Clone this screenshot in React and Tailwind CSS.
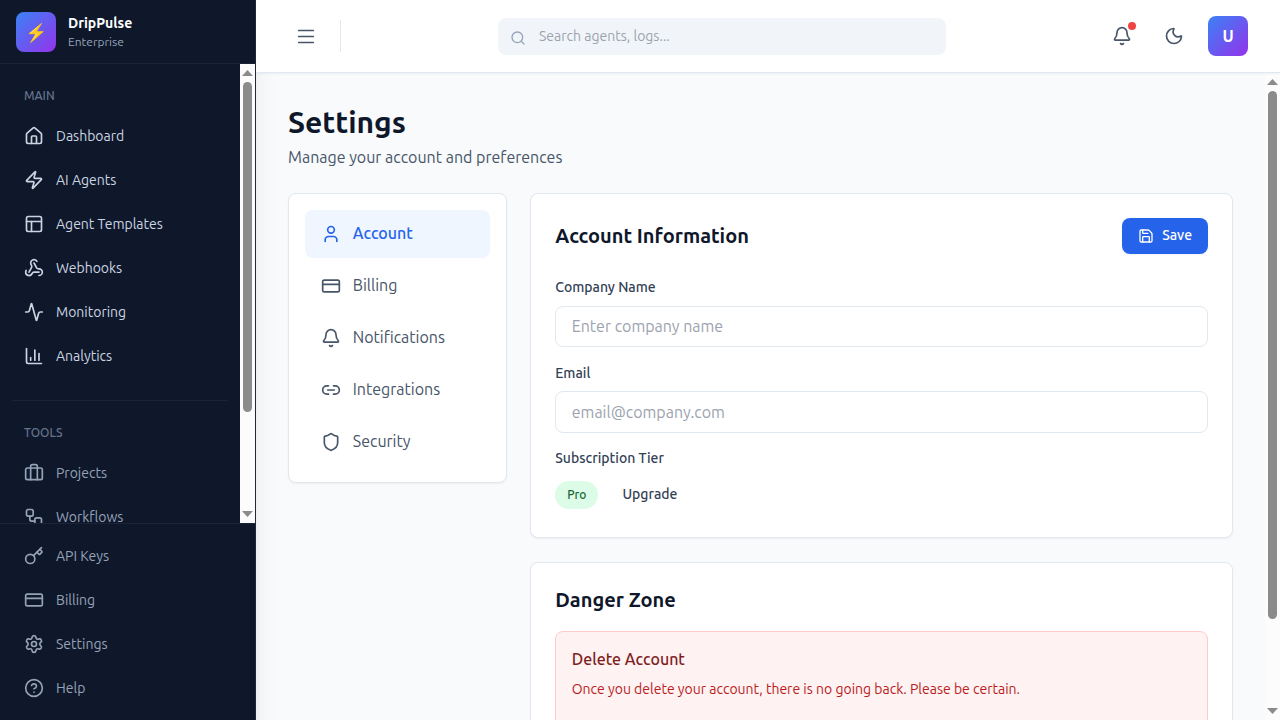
import React from "react";
import {
  Activity, Bell, Briefcase, ChartColumn, CircleQuestionMark, CreditCard, House, Key, Link2,
  Moon, PanelsTopLeft, Save, Search, Settings, Shield, User, Webhook, Workflow, Zap,
} from "lucide-react";

const mainLinks = [
  ["Dashboard", House],
  ["AI Agents", Zap],
  ["Agent Templates", PanelsTopLeft],
  ["Webhooks", Webhook],
  ["Monitoring", Activity],
  ["Analytics", ChartColumn],
];
const toolLinks = [
  ["Projects", Briefcase],
  ["Workflows", Workflow],
];
const footerLinks = [
  ["API Keys", Key],
  ["Billing", CreditCard],
  ["Settings", Settings],
  ["Help", CircleQuestionMark],
];
const tabs = [
  ["Account", User],
  ["Billing", CreditCard],
  ["Notifications", Bell],
  ["Integrations", Link2],
  ["Security", Shield],
];

function NavList({ links, className }) {
  return (
    <ul className={`flex flex-col gap-1 ${className}`}>
      {links.map(([label, Icon]) => (
        <li key={label}>
          <a className="flex h-10 items-center gap-3 px-3 text-sm">
            <Icon size={20} strokeWidth={2} />
            <span>{label}</span>
          </a>
        </li>
      ))}
    </ul>
  );
}

function Scrollbar({ thumb }) {
  return (
    <div className="flex w-[15px] shrink-0 flex-col items-center justify-between bg-[#fcfcfc]">
      <svg width="11" height="6" viewBox="0 0 11 6" className="mt-1.5 shrink-0 fill-[#8b8b8b]">
        <path d="M5.5 0 11 6H0z" />
      </svg>
      <div className="flex w-full grow justify-center pt-1.5">
        <div className={`w-[9px] rounded-full bg-[#8b8b8b] ${thumb}`} />
      </div>
      <svg width="11" height="6" viewBox="0 0 11 6" className="mb-1.5 shrink-0 fill-[#8b8b8b]">
        <path d="M0 0H11L5.5 6z" />
      </svg>
    </div>
  );
}

function Sidebar() {
  return (
    <aside className="z-10 flex w-64 shrink-0 flex-col border-r border-[#1e293b] bg-[#0f172a] shadow-xl">
      <div className="flex h-16 shrink-0 items-center gap-3 border-b border-[#1b2437] px-4">
        <div className="flex size-10 items-center justify-center rounded-lg bg-[linear-gradient(135deg,#3b82f6,#9333ea)] text-lg">
          ⚡
        </div>
        <div className="pb-px">
          <div className="text-sm font-bold text-white">DripPulse</div>
          <div className="mt-px text-xs text-[#94a3b8]">Enterprise</div>
        </div>
      </div>
      <div className="flex min-h-0 grow">
        <nav className="grow overflow-hidden px-3 pt-6">
          <h2 className="mb-3 px-3 text-xs font-[550] text-[#64748b]">MAIN</h2>
          <NavList links={mainLinks} className="text-[#cbd5e1]" />
          <div className="my-6 h-px bg-[#1b2437]" />
          <h2 className="mb-3 px-3 text-xs font-[550] text-[#64748b]">TOOLS</h2>
          <NavList links={toolLinks} className="text-[#94a3b8]" />
        </nav>
        <Scrollbar thumb="h-[330px]" />
      </div>
      <div className="shrink-0 border-t border-[#1b2437] p-3">
        <NavList links={footerLinks} className="text-[#94a3b8]" />
      </div>
    </aside>
  );
}

function Header() {
  return (
    <header className="z-20 flex h-[73px] shrink-0 items-center justify-between border-b border-[#e2e8f0] bg-white px-8 shadow-xs">
      <div className="flex items-center gap-4">
        <button className="w-9 px-1.5 text-[#475569]">
          <svg width="24" height="24" viewBox="0 0 24 24" fill="none" stroke="currentColor" strokeWidth="1.7" strokeLinecap="round">
            <path d="M4.75 6.5h14.5M4.75 12.5h14.5M4.75 18.5h14.5" />
          </svg>
        </button>
        <div className="h-8 w-px bg-[#e2e8f0]" />
      </div>
      <div className="mr-[9px] flex h-[37px] w-[448px] items-center gap-[13px] rounded-lg bg-[#f1f5f9] px-3">
        <Search size={16} className="mt-[3px] text-[#94a3b8]" />
        <input className="grow text-sm outline-none placeholder:text-[#9ca3af]" placeholder="Search agents, logs..." />
      </div>
      <div className="flex items-center text-[#475569]">
        <button className="relative mr-8">
          <Bell size={20} />
          <span className="absolute -top-1 -right-1 size-2 rounded-full bg-[#ef4444]" />
        </button>
        <button className="mr-6">
          <Moon size={20} />
        </button>
        <div className="flex size-10 items-center justify-center rounded-lg bg-[linear-gradient(135deg,#3b82f6,#9333ea)] font-semibold text-white">
          U
        </div>
      </div>
    </header>
  );
}

function Field({ label, placeholder }) {
  return (
    <div>
      <label className="mb-[8.25px] block text-sm font-medium text-[#334155]">{label}</label>
      <input
        className="block h-[41.5px] w-full rounded-lg border border-[#e2e8f0] bg-white px-[15.5px] outline-none placeholder:text-[#9ca3af]"
        placeholder={placeholder}
      />
    </div>
  );
}

function Content() {
  return (
    <main className="grow overflow-hidden px-8 pt-[31.25px]">
      <h1 className="text-3xl font-bold text-[#0f172a]">Settings</h1>
      <p className="mt-[4.5px] text-[#475569]">Manage your account and preferences</p>
      <div className="mt-[23.75px] grid grid-cols-4 items-start gap-6">
        <div className="-mr-[0.5px] flex flex-col gap-1 rounded-lg border border-[#e2e8f0] bg-white p-4 shadow-xs">
          {tabs.map(([label, Icon], i) => (
            <button
              key={label}
              className={`flex h-12 items-center gap-[11.75px] rounded-lg px-4 ${
                i === 0 ? "bg-[#eff6ff] font-medium text-[#2563eb]" : "text-[#475569]"
              }`}
            >
              <Icon size={20} />
              <span className="pb-px">{label}</span>
            </button>
          ))}
        </div>
        <div className="col-span-3 flex flex-col gap-6">
          <section className="rounded-lg border border-[#e2e8f0] bg-white p-6 shadow-xs">
            <div className="mb-[23.75px] flex items-center justify-between">
              <h2 className="text-xl font-semibold text-[#0f172a]">Account Information</h2>
              <button className="flex h-9 items-center gap-2 rounded-lg bg-[#2563eb] px-4 text-sm font-medium text-white shadow-xs">
                <Save size={16} />
                <span className="pb-px">Save</span>
              </button>
            </div>
            <div className="flex flex-col gap-[15.75px]">
              <Field label="Company Name" placeholder="Enter company name" />
              <Field label="Email" placeholder="email@company.com" />
              <div>
                <div className="mb-[8.25px] text-sm font-medium text-[#334155]">Subscription Tier</div>
                <div className="flex items-center gap-2">
                  <span className="rounded-full bg-[#dcfce7] px-3 py-1.5 text-xs font-[550] text-[#166534]">Pro</span>
                  <button className="h-9 px-4 pb-px text-sm font-medium text-[#334155]">Upgrade</button>
                </div>
              </div>
            </div>
          </section>
          <section className="rounded-lg border border-[#e2e8f0] bg-white p-6 pt-[23.75px] shadow-xs">
            <h2 className="mb-[16.25px] text-xl font-semibold text-[#0f172a]">Danger Zone</h2>
            <div className="rounded-lg border border-[#fecaca] bg-[#fef2f2] px-[15.5px] pt-[15.75px] pb-12">
              <h3 className="font-[550] text-[#7f1d1d]">Delete Account</h3>
              <p className="mt-2 text-sm text-[#b91c1c]">
                Once you delete your account, there is no going back. Please be certain.
              </p>
            </div>
          </section>
        </div>
      </div>
    </main>
  );
}

export default function App() {
  return (
    <div className="flex h-screen overflow-hidden bg-[#f8fafc] font-['Ubuntu','Noto_Sans',sans-serif]">
      <Sidebar />
      <div className="flex min-w-0 grow flex-col">
        <Header />
        <div className="flex min-h-0 grow">
          <Content />
          <Scrollbar thumb="h-[528px]" />
        </div>
      </div>
    </div>
  );
}
